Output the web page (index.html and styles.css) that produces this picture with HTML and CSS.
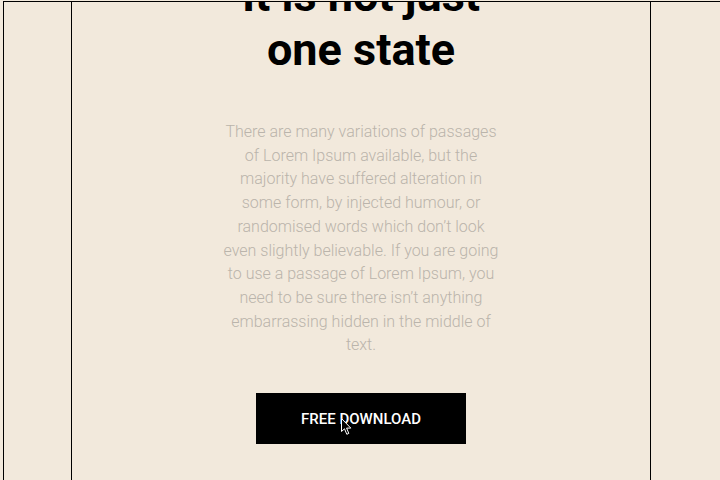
FILE: index.html
```html
<!DOCTYPE html>
<html>
<head>
<meta charset="utf-8">
<link rel="stylesheet" href="styles.css">
</head>
<body>
<div class="frame">
  <main class="column">
    <h1 class="title">It is not just<br>one state</h1>
    <p class="lead">There are many variations of passages of Lorem Ipsum available, but the majority have suffered alteration in some form, by injected humour, or randomised words which don’t look even slightly believable. If you are going to use a passage of Lorem Ipsum, you need to be sure there isn’t anything embarrassing hidden in the middle of text.</p>
    <a class="btn" href="#">FREE DOWNLOAD
      <svg class="cursor" width="12" height="18" viewBox="0 0 12 18"><path d="M0.5 0.5 L0.5 13.5 L3.5 10.8 L5.8 16.3 L7.8 15.4 L5.6 10.1 L9.8 10.1 Z" fill="#000" stroke="#fff" stroke-width="1"/></svg>
    </a>
  </main>
</div>
</body>
</html>
```
FILE: styles.css
```css
html, body {
  margin: 0;
  padding: 0;
  background: #f2e9dc;
  overflow: hidden;
}
body {
  font-family: Roboto, "Liberation Sans", sans-serif;
  width: 720px;
  height: 480px;
}
.frame {
  margin-top: 1px;
  margin-left: 3px;
  border-top: 1px solid #000;
  border-left: 1px solid #000;
  height: 478px;
  overflow: hidden;
}
.column {
  margin-left: 67px;
  width: 580px;
  box-sizing: border-box;
  height: 478px;
  border-left: 1px solid #000;
  border-right: 1px solid #000;
  display: flex;
  flex-direction: column;
  align-items: center;
}
.title {
  margin: -33px 0 0;
  font-size: 45px;
  line-height: 54px;
  font-weight: 700;
  color: #000;
  text-align: center;
}
.lead {
  margin: 43px 0 0;
  width: 282px;
  font-size: 16px;
  font-weight: 300;
  line-height: 23.7px;
  color: #bab4ab;
  text-align: center;
}
.btn {
  position: relative;
  margin-top: 36px;
  width: 210px;
  height: 51px;
  background: #000;
  color: #fff;
  font-size: 15px;
  font-weight: 500;
  text-decoration: none;
  display: flex;
  align-items: center;
  justify-content: center;
}
.cursor {
  position: absolute;
  left: 85px;
  top: 25px;
}
```
